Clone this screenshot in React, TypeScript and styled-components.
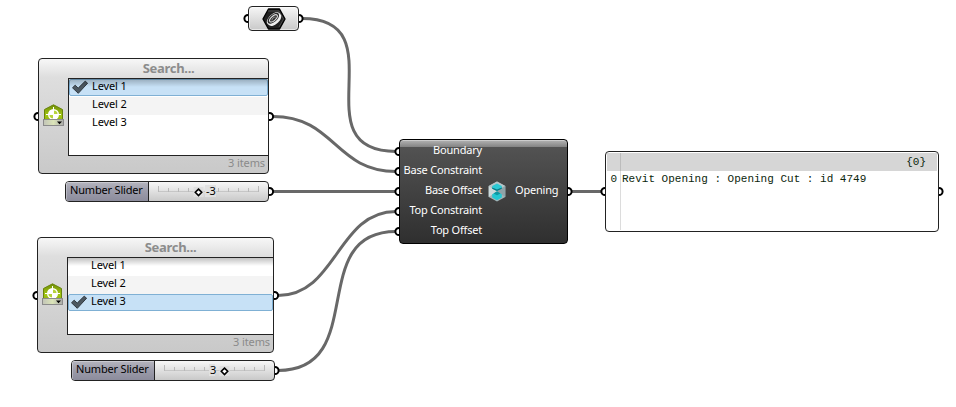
import React from 'react';
import styled, { createGlobalStyle, css } from 'styled-components';

const Global = createGlobalStyle`
  html, body { margin: 0; background: #fff; overflow: hidden; }
  * { box-sizing: border-box; }
`;

const Canvas = styled.main`
  position: relative;
  width: 956px;
  height: 407px;
  overflow: hidden;
  background: #fff;
  color: #000;
  font: 11px/18px 'Noto Sans', 'Open Sans', sans-serif;
  letter-spacing: -0.12px;
  white-space: nowrap;
`;

const Wires = styled.svg`
  position: absolute;
  inset: 0;
`;

type Box = { $x: number; $y: number; $w: number; $h: number };

const placed = css<Box>`
  position: absolute;
  left: ${p => p.$x}px;
  top: ${p => p.$y}px;
  width: ${p => p.$w}px;
  height: ${p => p.$h}px;
  border: 1px solid #222;
  border-radius: 4px;
  overflow: hidden;
`;

const ParamNode = styled.div<Box>`
  ${placed}
  display: flex;
  align-items: center;
  justify-content: center;
  background: linear-gradient(#f6f6f6, #c9c9c9);
  box-shadow: inset 0 0 0 1px rgba(255, 255, 255, 0.55);
`;

const ListNode = styled.section<Box>`
  ${placed}
  display: grid;
  grid-template-columns: 29px 1fr;
  grid-template-rows: 19px 78px 1fr;
  background: linear-gradient(#f7f7f7 0, #dedede 16%, #c9c9c9 100%);
`;

const SearchTitle = styled.header`
  grid-column: 1 / 3;
  padding-left: 30px;
  text-align: center;
  color: #8c8c8c;
  font-weight: 700;
  font-size: 13px;
  letter-spacing: -0.3px;
  line-height: 18px;
`;

const IconCell = styled.div`
  display: flex;
  justify-content: center;
  padding: 26px 0 0 1px;
`;

const Items = styled.ul`
  position: relative;
  margin: 0;
  padding: 0;
  list-style: none;
  border: 1px solid #222;
  border-right: 0;
  background: #fff;
  &::after {
    content: '';
    position: absolute;
    inset: 0 0 auto;
    height: 8px;
    background: linear-gradient(rgba(0, 0, 0, 0.24), rgba(0, 0, 0, 0));
  }
`;

const Item = styled.li<{ $selected: boolean; $alt: boolean }>`
  display: flex;
  height: 18px;
  line-height: 12px;
  font-size: 11px;
  background: ${p => (p.$alt ? '#f4f4f4' : '#fff')};
  border: 1px solid transparent;
  ${p => p.$selected && css`
    height: 17px;
    margin-bottom: 1px;
    background: #c7e1f6;
    border-color: #7fb0d4;
    border-radius: 2px;
  `}
`;

const CheckSlot = styled.span`
  display: flex;
  flex: none;
  width: 22px;
  padding-left: 1px;
`;

const Count = styled.footer`
  grid-column: 2;
  padding-right: 3px;
  text-align: right;
  color: #8a8a8a;
  line-height: 14px;
`;

const SliderNode = styled.div<Box>`
  ${placed}
  display: grid;
  grid-template-columns: 83px 1fr;
  background: linear-gradient(#f7f7f7, #c9c9c9);
`;

const SliderName = styled.div`
  border-right: 1px solid #222;
  background: linear-gradient(#b5b5be 0, #9d9dab 45%, #8c8c9c 100%);
  padding-left: 4px;
  letter-spacing: -0.18px;
  line-height: 16px;
  box-shadow: inset 1px 1px 0 rgba(255, 255, 255, 0.3);
`;

const Track = styled.div`
  display: flex;
  align-items: flex-start;
  padding-left: 9px;
`;

const Component = styled.section<Box>`
  ${placed}
  border-color: #000;
  display: grid;
  grid-template-columns: 82px 30px 1fr;
  color: #fff;
  letter-spacing: -0.2px;
  background:
    linear-gradient(#b4b4b4, #838383) top / 100% 7px no-repeat,
    linear-gradient(#555, #2f2f2f);
  box-shadow: inset 0 1px 0 #ccc;
`;

const Inputs = styled.div`
  display: grid;
  grid-template-rows: repeat(5, 20px);
  text-align: right;
  line-height: 20px;
`;

const ComponentIcon = styled.div`
  display: flex;
  align-items: center;
  justify-content: center;
`;

const Output = styled.div`
  line-height: 100px;
  padding-left: 3px;
`;

const Panel = styled.section<Box>`
  ${placed}
  display: grid;
  grid-template-columns: 14px 1fr;
  grid-template-rows: 18px 1fr;
  padding: 1px;
  background: #fff;
  font: 11px/17px 'Liberation Mono', monospace;
  letter-spacing: 0;
  color: #0c260c;
`;

const Gutter = styled.div<{ $head?: boolean }>`
  border-right: 1px solid ${p => (p.$head ? '#bcbcbc' : '#dcdcdc')};
  background: ${p => (p.$head ? '#d6d6d6' : '#fff')};
  text-align: right;
  padding-right: 3px;
`;

const PanelPath = styled.div`
  background: #d6d6d6;
  text-align: right;
  padding-right: 11px;
  line-height: 18px;
`;

const PanelText = styled.div`
  padding-left: 1px;
`;

const wirePaths = [
  'M302 18.5C400 18.5 298 151.5 396 151.5',
  'M273 116.5C335 116.5 335 171.5 396 171.5',
  'M273 191.5H396',
  'M278 295.5C337 295.5 337 211.5 396 211.5',
  'M278 370.5C370 370.5 305 231.5 396 231.5',
  'M572 191.5H602',
];

const ports: [number, number][] = [
  [248, 18.5], [299, 18.5],
  [38, 116.5], [269.5, 116.5], [269.5, 191.5],
  [37, 295.5], [274.5, 295.5], [275, 370.5],
  [399, 151.5], [399, 171.5], [399, 191.5], [399, 211.5], [399, 231.5],
  [568, 191.5], [605, 191.5], [939, 191.5],
];

const CheckIcon = () => (
  <svg width="18" height="15" viewBox="0 0 18 15">
    <path d="M1.5 7.8 4.2 5.2 7.2 8.1 14.2 1.2 16.6 3.2 7.3 13.3Z" fill="#4d5861" stroke="#30383f" strokeLinejoin="round" />
  </svg>
);

const LevelIcon = () => (
  <svg width="22" height="24" viewBox="0 0 22 24">
    <defs>
      <linearGradient id="lime" x2="0" y2="1">
        <stop stopColor="#6f8d08" /><stop offset=".55" stopColor="#a3c612" /><stop offset="1" stopColor="#86a810" />
      </linearGradient>
      <linearGradient id="tray" x2="1" y2="0">
        <stop stopColor="#c2c4b8" /><stop offset=".5" stopColor="#dbe4b8" /><stop offset="1" stopColor="#aaa" />
      </linearGradient>
    </defs>
    <path d="M1.5 20V5.5L10.5.8l9 4.7V20Z" fill="url(#lime)" stroke="#69840d" />
    <circle cx="10.5" cy="10.5" r="4.8" fill="#b7d33c" />
    <path d="M10.5 10.5V5.7A4.8 4.8 0 0 0 5.7 10.5ZM10.5 10.5v4.8a4.8 4.8 0 0 0 4.8-4.8Z" fill="#fff" />
    <path d="M10.5 3v13M3 10.5h15" stroke="#fff" />
    <circle cx="10.5" cy="10.5" r="4.8" fill="none" stroke="#fff" strokeWidth="1.4" />
    <rect x=".5" y="15.5" width="20" height="6" fill="url(#tray)" stroke="#8b8b8b" />
    <path d="M14 17.5h5L16.5 20.2Z" fill="#000" />
  </svg>
);

const GeometryIcon = () => (
  <svg width="24" height="22" viewBox="0 0 24 22">
    <path d="M6.5 1h11L23 11l-5.5 10h-11L1 11Z" fill="#202020" stroke="#000" strokeWidth="1.4" strokeLinejoin="round" />
    <path d="M6 3h11l4.5 8-4.5 8" fill="none" stroke="#555" strokeWidth=".8" />
    <g transform="rotate(-42 12 11)">
      <path d="M4 10.5C4 4.5 20 4.5 20 10.5v1.2c0 6.2-16 6.2-16 0Z" fill="#eee" />
      <ellipse cx="12" cy="10" rx="7" ry="3.7" fill="#2b2b2b" />
      <ellipse cx="12" cy="10.2" rx="4.8" ry="2.2" fill="none" stroke="#ddd" strokeWidth="1.1" />
      <path d="M9.5 10.7c1-1.5 4-1.4 5 0" fill="none" stroke="#aaa" strokeWidth=".8" />
    </g>
  </svg>
);

const OpeningIcon = () => (
  <svg width="18" height="21" viewBox="0 0 18 21">
    <path d="M9 .5 17.3 5v11L9 20.5.7 16V5Z" fill="#a3b4b7" />
    <path d="M9 .5 17.3 5 9 9 .7 5Z" fill="#b6c5c8" />
    <path d="M.7 5 9 10.5.7 16Z" fill="#cbd9db" />
    <path d="M17.3 5 9 10.5l8.3 5.5Z" fill="#8fa3a8" />
    <path d="M4.2 5 9 2.6 13.8 5v2.5L9 10 4.2 7.5Z" fill="#2bc9d4" />
    <path d="m4.2 6.5 4.8 2 4.8-2v1.2L9 10 4.2 7.7Z" fill="#087985" />
    <path d="M4.2 13.3 9 10.8l4.8 2.5v3.2L9 19.2l-4.8-2.7Z" fill="#23c7d2" />
    <path d="m5.5 12.6 3.5-2.4 3.5 2.4L9 14.3Z" fill="#0d97a2" />
  </svg>
);

const SliderTrack = ({ knob, value, textX }: { knob: number; value: string; textX: number }) => (
  <svg width="104" height="19" viewBox="0 0 104 19">
    <path d="M0 9.5h101" stroke="#c6c6c6" />
    {Array.from({ length: 11 }, (_, i) => (
      <path key={i} d={`M${i * 10 + 0.5} ${i % 10 ? 6 : 4}V10`} stroke="#b9b9b9" />
    ))}
    <rect x={textX - 1} y="3" width={value.length * 5 + 1} height="12" fill="#e1e1e1" />
    <text x={textX} y="13" fontSize="11">{value}</text>
    <rect x={knob - 5} y="5" width="10" height="10" fill="#dfdfdf" />
    <path d={`M${knob} 7.1l3.2 3.2-3.2 3.2-3.2-3.2Z`} fill="#fff" stroke="#000" strokeWidth="1.6" />
  </svg>
);

const LevelList = ({ x, y, w, h, selected }: { x: number; y: number; w: number; h: number; selected: number }) => (
  <ListNode $x={x} $y={y} $w={w} $h={h}>
    <SearchTitle>Search...</SearchTitle>
    <IconCell><LevelIcon /></IconCell>
    <Items>
      {['Level 1', 'Level 2', 'Level 3'].map((label, i) => (
        <Item key={label} $selected={i === selected} $alt={i === 1}>
          <CheckSlot>{i === selected && <CheckIcon />}</CheckSlot>{label}
        </Item>
      ))}
    </Items>
    <Count>3 items</Count>
  </ListNode>
);

export default function App() {
  return (
    <>
      <Global />
      <Canvas>
        <Wires width="956" height="407">
          <g fill="none" stroke="#686868" strokeWidth="3">
            {wirePaths.map(d => <path key={d} d={d} />)}
          </g>
          <g fill="#fff" stroke="#000" strokeWidth="2">
            {ports.map(([cx, cy]) => <circle key={`${cx}-${cy}`} cx={cx} cy={cy} r="3.6" />)}
          </g>
        </Wires>

        <ParamNode $x={248} $y={6} $w={51} $h={25}><GeometryIcon /></ParamNode>
        <LevelList x={38} y={58} w={231} h={116} selected={0} />
        <SliderNode $x={65} $y={181} $w={204} $h={21}>
          <SliderName>Number Slider</SliderName>
          <Track><SliderTrack knob={40.5} value="-3" textX={48} /></Track>
        </SliderNode>
        <LevelList x={37} y={237} w={237} h={116} selected={2} />
        <SliderNode $x={71} $y={360} $w={204} $h={21}>
          <SliderName>Number Slider</SliderName>
          <Track><SliderTrack knob={60.5} value="3" textX={46} /></Track>
        </SliderNode>

        <Component $x={399} $y={139} $w={169} $h={105}>
          <Inputs>
            {['Boundary', 'Base Constraint', 'Base Offset', 'Top Constraint', 'Top Offset'].map(n => <span key={n}>{n}</span>)}
          </Inputs>
          <ComponentIcon><OpeningIcon /></ComponentIcon>
          <Output>Opening</Output>
        </Component>

        <Panel $x={605} $y={151} $w={334} $h={81}>
          <Gutter $head />
          <PanelPath>{'{0}'}</PanelPath>
          <Gutter>0</Gutter>
          <PanelText>Revit Opening : Opening Cut : id 4749</PanelText>
        </Panel>
      </Canvas>
    </>
  );
}
